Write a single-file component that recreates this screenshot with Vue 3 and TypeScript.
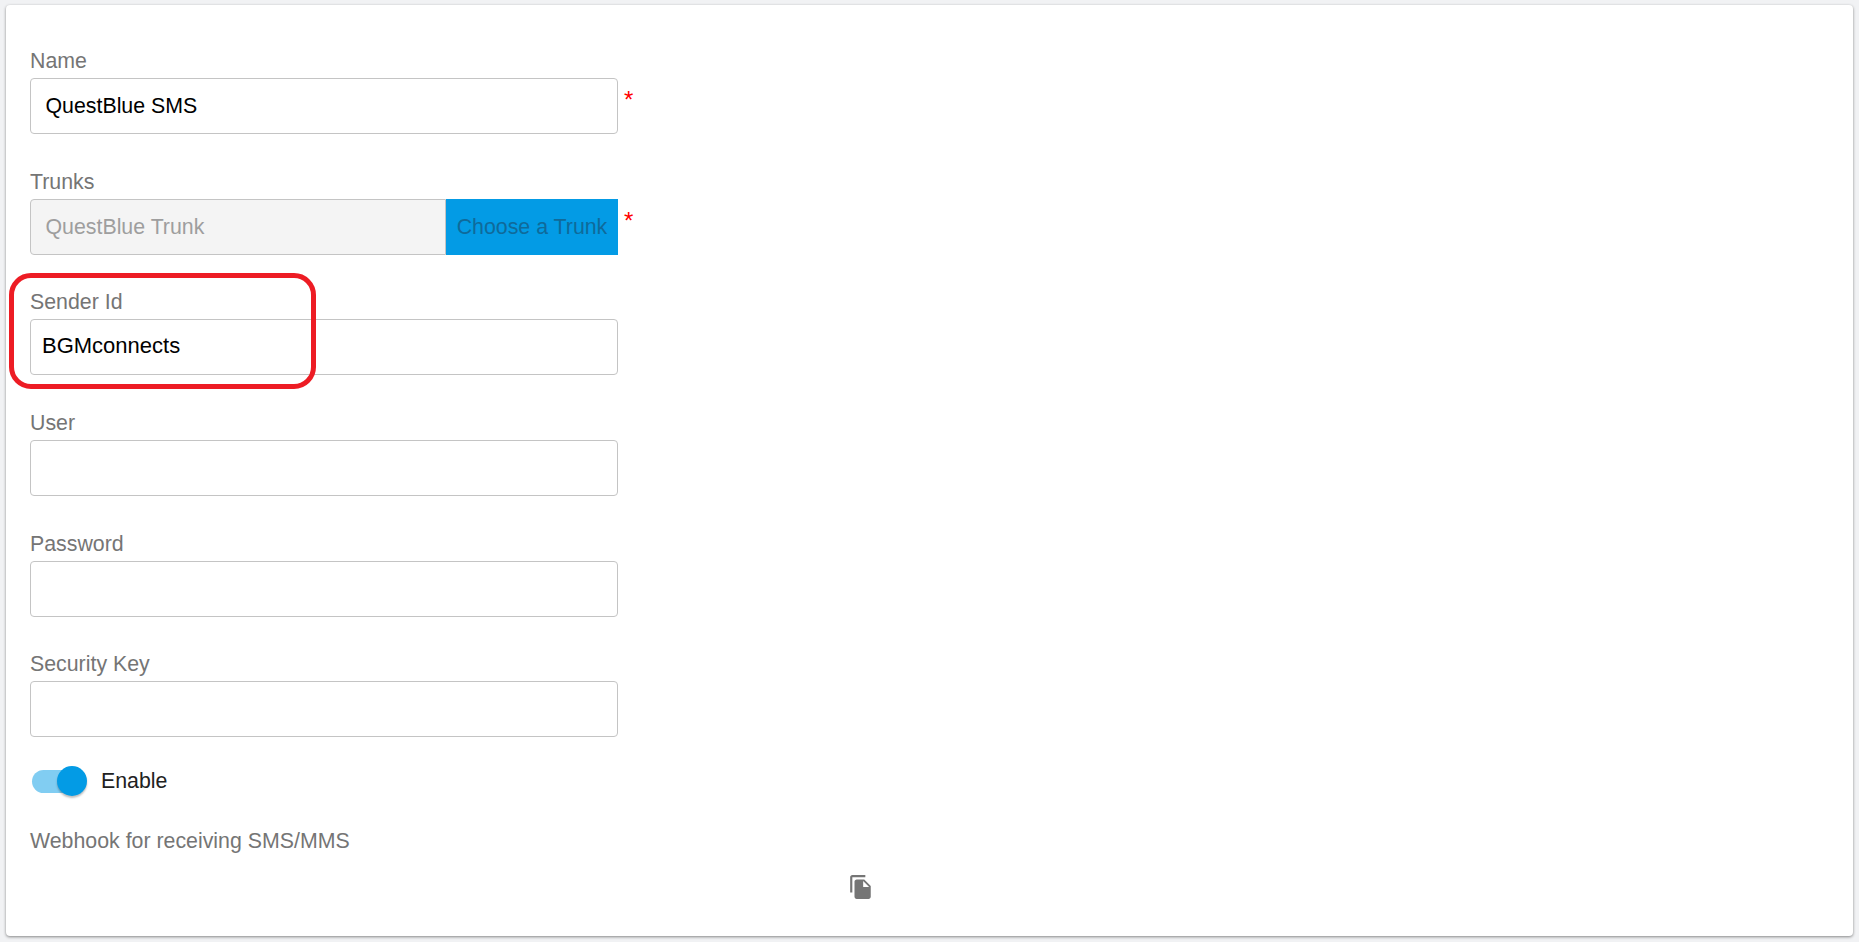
<script setup lang="ts">
const fields = [
  { label: "User", value: "", height: 121 },
  { label: "Password", value: "", height: 120 },
  { label: "Security Key", value: "", height: 121 },
];
</script>

<template>
  <div class="page">
    <div class="card">
      <div class="field">
        <label class="label">Name</label>
        <div class="row">
          <input class="input" type="text" value="QuestBlue SMS" />
          <span class="required">*</span>
        </div>
      </div>

      <div class="field trunks">
        <label class="label">Trunks</label>
        <div class="row">
          <div class="group">
            <input class="input locked" type="text" value="QuestBlue Trunk" disabled />
            <button class="pick" type="button">Choose a Trunk</button>
          </div>
          <span class="required">*</span>
        </div>
      </div>

      <div class="field">
        <label class="label">Sender Id</label>
        <div class="row">
          <input class="input sender" type="text" value="BGMconnects" />
        </div>
      </div>

      <div v-for="f in fields" :key="f.label" class="field" :style="{ height: f.height + 'px' }">
        <label class="label">{{ f.label }}</label>
        <div class="row">
          <input class="input" type="text" :value="f.value" />
        </div>
      </div>

      <div class="toggle-row">
        <span class="switch">
          <span class="track"></span>
          <span class="thumb"></span>
        </span>
        <span class="toggle-text">Enable</span>
      </div>

      <div class="webhook">Webhook for receiving SMS/MMS</div>

      <div class="copy-row">
        <svg class="copy" viewBox="0 0 24 24" fill="#757575" xmlns="http://www.w3.org/2000/svg">
          <path d="M16 1H4c-1.1 0-2 .9-2 2v14h2V3h12V1zm-1 4l6 6v10c0 1.1-.9 2-2 2H7.99C6.89 23 6 22.1 6 21l.01-14c0-1.1.89-2 1.99-2h7zm-1 7h5.5L14 6.5V12z" />
        </svg>
      </div>

      <!-- annotation drawn over the screenshot -->
      <div class="callout"></div>
    </div>
  </div>
</template>

<style>
html,
body {
  margin: 0;
  background: #f1f2f4;
}
</style>

<style scoped>
.page {
  height: 942px;
  box-sizing: border-box;
  padding: 5px 6px 6px 6px;
  font-family: "Liberation Sans", Arial, sans-serif;
}

.card {
  position: relative;
  height: 931px;
  box-sizing: border-box;
  padding: 43px 24px 0;
  background: #fff;
  border-radius: 4px;
  box-shadow: 0 1px 3px rgba(0, 0, 0, 0.45);
}

.field {
  height: 121px;
}

.trunks {
  height: 120px;
}

.label {
  display: block;
  height: 30px;
  line-height: 27px;
  font-size: 21.33px;
  color: #757575;
}

.row {
  display: flex;
  align-items: flex-start;
}

.input {
  box-sizing: border-box;
  width: 588px;
  height: 56px;
  padding: 0 14.5px;
  border: 1px solid #c4c4c4;
  border-radius: 4px;
  outline: none;
  background: #fff;
  font-family: inherit;
  font-size: 21.33px;
  color: #000;
}

.sender {
  padding: 0 11px 2px;
  font-size: 22px;
}

.group {
  display: flex;
  width: 588px;
}

.locked {
  flex: 1;
  width: auto;
  min-width: 0;
  border-radius: 4px 0 0 4px;
  background: #f4f4f4;
  color: #9e9e9e;
}

.pick {
  width: 172px;
  height: 56px;
  padding: 0;
  border: none;
  background: #039be5;
  font-family: inherit;
  font-size: 21.33px;
  color: #0f6a9a;
}

.required {
  margin: 10px 0 0 6px;
  font-size: 24px;
  line-height: 24px;
  color: #f00;
}

.toggle-row {
  display: flex;
  align-items: center;
  height: 32px;
  margin-top: -7px;
}

.switch {
  position: relative;
  width: 56px;
  height: 32px;
  margin-left: 2px;
}

.track {
  position: absolute;
  left: 0;
  top: 5px;
  width: 51px;
  height: 23px;
  border-radius: 12px;
  background: #81cdf2;
}

.thumb {
  position: absolute;
  left: 25px;
  top: 1px;
  width: 30px;
  height: 30px;
  border-radius: 50%;
  background: #039be5;
  box-shadow: 0 2px 2px rgba(0, 0, 0, 0.25);
}

.toggle-text {
  margin-left: 13px;
  font-size: 21.33px;
  color: #212121;
}

.webhook {
  margin-top: 32px;
  line-height: 24px;
  font-size: 21.33px;
  color: #757575;
}

.copy-row {
  display: flex;
  justify-content: center;
  width: 1662px;
  margin-top: 21px;
}

.copy {
  width: 26px;
  height: 26px;
}

.callout {
  position: absolute;
  left: 3px;
  top: 268px;
  width: 307px;
  height: 116px;
  box-sizing: border-box;
  border: 5px solid #ed1c24;
  border-radius: 22px;
  pointer-events: none;
}
</style>
